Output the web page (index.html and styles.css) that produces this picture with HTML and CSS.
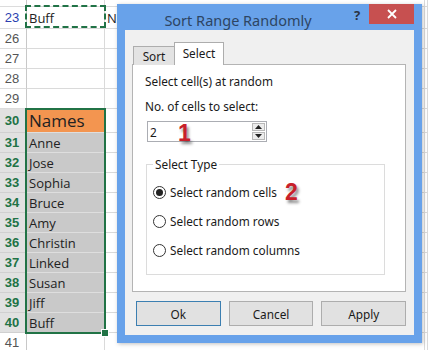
FILE: index.html
```html
<!DOCTYPE html>
<html>
<head>
<meta charset="utf-8">
<link rel="stylesheet" href="styles.css">
</head>
<body>
<div class="sheet">
  <div class="hd"></div><div class="c"></div><div class="c"></div><div class="c"></div>
  <div class="hd blue">23</div><div class="c">Buff</div><div class="c">N</div><div class="c"></div>
  <div class="hd">26</div><div class="c"></div><div class="c"></div><div class="c"></div>
  <div class="hd">27</div><div class="c"></div><div class="c"></div><div class="c"></div>
  <div class="hd">28</div><div class="c"></div><div class="c"></div><div class="c"></div>
  <div class="hd">29</div><div class="c"></div><div class="c"></div><div class="c"></div>
  <div class="hd sel">30</div><div class="c names">Names</div><div class="c"></div><div class="c"></div>
  <div class="hd sel">31</div><div class="c grey">Anne</div><div class="c"></div><div class="c"></div>
  <div class="hd sel">32</div><div class="c grey">Jose</div><div class="c"></div><div class="c"></div>
  <div class="hd sel">33</div><div class="c grey">Sophia</div><div class="c"></div><div class="c"></div>
  <div class="hd sel">34</div><div class="c grey">Bruce</div><div class="c"></div><div class="c"></div>
  <div class="hd sel">35</div><div class="c grey">Amy</div><div class="c"></div><div class="c"></div>
  <div class="hd sel">36</div><div class="c grey">Christin</div><div class="c"></div><div class="c"></div>
  <div class="hd sel">37</div><div class="c grey">Linked</div><div class="c"></div><div class="c"></div>
  <div class="hd sel">38</div><div class="c grey">Susan</div><div class="c"></div><div class="c"></div>
  <div class="hd sel">39</div><div class="c grey">Jiff</div><div class="c"></div><div class="c"></div>
  <div class="hd sel">40</div><div class="c grey">Buff</div><div class="c"></div><div class="c"></div>
  <div class="hd">41</div><div class="c"></div><div class="c"></div><div class="c"></div>
  <div class="marquee"></div>
  <div class="selection"><span class="handle"></span></div>
</div>

<div class="dialog">
  <div class="titlebar">
    <div class="title">Sort Range Randomly</div>
    <div class="help">?</div>
    <div class="close">
      <svg width="10" height="10" viewBox="0 0 10 10"><path d="M1 1 L9 9 M9 1 L1 9" stroke="#fff" stroke-width="1.8" fill="none"/></svg>
    </div>
  </div>
  <div class="client">
    <div class="tabs">
      <div class="tab">Sort</div>
      <div class="tab active">Select</div>
    </div>
    <div class="panel">
      <div class="lbl">Select cell(s) at random</div>
      <div class="lbl l2">No. of cells to select:</div>
      <div class="input">
        <span class="val">2</span>
        <span class="badge b1">1</span>
        <div class="spin">
          <div class="sb"><svg width="7" height="4" viewBox="0 0 7 4"><path d="M0 4 L3.5 0 L7 4 Z" fill="#222"/></svg></div>
          <div class="sb"><svg width="7" height="4" viewBox="0 0 7 4"><path d="M0 0 L7 0 L3.5 4 Z" fill="#222"/></svg></div>
        </div>
      </div>
      <fieldset class="group">
        <legend>Select Type</legend>
        <div class="radio"><span class="rb on"></span>Select random cells<span class="badge b2">2</span></div>
        <div class="radio"><span class="rb"></span>Select random rows</div>
        <div class="radio"><span class="rb"></span>Select random columns</div>
      </fieldset>
    </div>
    <div class="buttons">
      <div class="btn ok">Ok</div>
      <div class="btn">Cancel</div>
      <div class="btn">Apply</div>
    </div>
  </div>
</div>
</body>
</html>
```

FILE: styles.css
```css
html, body {
  margin: 0;
  padding: 0;
  width: 428px;
  height: 350px;
  overflow: hidden;
  background: #fff;
}

.sheet {
  position: relative;
  display: grid;
  grid-template-columns: 27px 78px 320px 1fr;
  grid-template-rows: 7px 22px repeat(4, 20px) 24px repeat(10, 20px) 20px;
  font-family: "Open Sans", sans-serif;
  font-size: 13px;
  color: #222;
}

.hd {
  box-sizing: border-box;
  border-right: 1px solid #c8c8c8;
  border-bottom: 1px solid #dcdcdc;
  background: #fff;
  color: #555;
  font-family: "Liberation Sans", sans-serif;
  font-size: 13px;
  display: flex;
  align-items: center;
  justify-content: center;
  padding-right: 2px;
}
.hd.blue { color: #2c3fb0; }
.hd.sel {
  background: #e1e1e1;
  color: #217346;
  font-weight: bold;
  border-bottom-color: #d0d0d0;
}

.c {
  box-sizing: border-box;
  border-right: 1px solid #dadada;
  border-bottom: 1px solid #dadada;
  padding-left: 2px;
  display: flex;
  align-items: center;
  white-space: nowrap;
  overflow: hidden;
}
.c.grey {
  background: #c9c9c9;
  border-bottom-color: #dedede;
}
.c.names {
  background: #f39550;
  font-size: 17px;
  border-bottom-color: #dedede;
}

.marquee {
  position: absolute;
  grid-column: 2 / 3;
  grid-row: 2 / 3;
  inset: -2px -1px 1px -2px;
  border: 2px dashed #217346;
}
.selection {
  position: absolute;
  grid-column: 2 / 3;
  grid-row: 7 / 18;
  inset: -1px -1px -1px -2px;
  border: 2px solid #217346;
}
.handle {
  position: absolute;
  right: -5px;
  bottom: -5px;
  width: 6px;
  height: 6px;
  background: #217346;
  border: 1px solid #fff;
}

/* dialog */
.dialog {
  position: absolute;
  left: 117px;
  top: 4px;
  width: 305px;
  height: 339px;
  box-sizing: border-box;
  background: #68a2ea;
  padding: 0 8px 8px 8px;
  display: flex;
  flex-direction: column;
  font-family: "Noto Sans", sans-serif;
  font-size: 11.8px;
  color: #1a1a1a;
  box-shadow: 1px 1px 4px rgba(0,0,0,0.25);
}
.titlebar {
  height: 26px;
  display: flex;
  align-items: flex-start;
}
.title {
  flex: 1;
  text-align: center;
  font-size: 14.5px;
  color: #2d4563;
  padding-top: 7px;
  line-height: 18px;
  padding-left: 6px;
}
.help {
  width: 24px;
  text-align: center;
  font-weight: bold;
  font-size: 13px;
  color: #2a3344;
  padding-top: 3px;
  line-height: 16px;
}
.close {
  width: 45px;
  height: 20px;
  background: #c75050;
  display: flex;
  align-items: center;
  justify-content: center;
}
.client {
  flex: 1;
  background: #f0f0f0;
  padding: 13px 8px 0 7px;
  display: flex;
  flex-direction: column;
}
.tabs {
  display: flex;
  align-items: flex-end;
  height: 22px;
  margin-bottom: -1px;
  position: relative;
  z-index: 1;
}
.tab {
  box-sizing: border-box;
  height: 19px;
  width: 42px;
  margin-left: 1px;
  border: 1px solid #adadad;
  border-bottom: none;
  background: #e3e3e3;
  text-align: center;
  line-height: 18px;
}
.tab.active {
  height: 23px;
  width: 50px;
  margin-left: -1px;
  background: #fff;
  line-height: 20px;
}
.panel {
  box-sizing: border-box;
  height: 228px;
  border: 1px solid #b4b4b4;
  background: #fff;
  padding: 8px 10px 0 12px;
}
.lbl {
  line-height: 16px;
}
.l2 { margin-top: 9px; }
.input {
  position: relative;
  box-sizing: border-box;
  width: 120px;
  height: 21px;
  margin: 7px 0 0 2px;
  border: 1px solid #abadb3;
  display: flex;
  align-items: center;
  padding-left: 2px;
}
.val { flex: 1; }
.badge {
  font-family: "Liberation Sans", sans-serif;
  font-weight: bold;
  font-size: 23px;
  color: #c8202a;
  text-shadow: 2px 3px 3px rgba(0,0,0,0.45);
  line-height: 20px;
}
.b1 {
  position: absolute;
  left: 30px;
  top: 1px;
}
.b2 {
  margin-left: 8px;
}
.spin {
  width: 13px;
  height: 17px;
  margin-right: 1px;
  display: flex;
  flex-direction: column;
  gap: 1px;
}
.sb {
  flex: 1;
  box-sizing: border-box;
  border: 1px solid #b8b8b8;
  background: #ececec;
  display: flex;
  align-items: center;
  justify-content: center;
}
.group {
  margin: 14px 10px 0 1px;
  padding: 0 0 16px 6px;
  border: 1px solid #dcdcdc;
  min-width: 0;
}
.group legend {
  padding: 0 2px;
  line-height: 16px;
}
.radio {
  display: flex;
  align-items: center;
  height: 16px;
  margin-top: 13px;
}
.radio:first-of-type { margin-top: 12px; }
.rb {
  box-sizing: border-box;
  width: 13px;
  height: 13px;
  border-radius: 50%;
  border: 1px solid #333;
  background: #fff;
  margin-right: 4px;
  display: flex;
  align-items: center;
  justify-content: center;
}
.rb.on::after {
  content: "";
  width: 7px;
  height: 7px;
  border-radius: 50%;
  background: #222;
}
.buttons {
  display: flex;
  gap: 8px;
  margin: 9px 0 0 4px;
}
.btn {
  box-sizing: border-box;
  width: 85px;
  height: 25px;
  border: 1px solid #adadad;
  background: #e1e1e1;
  display: flex;
  align-items: center;
  justify-content: center;
}
.btn.ok {
  border-color: #3c7fb1;
}
```
